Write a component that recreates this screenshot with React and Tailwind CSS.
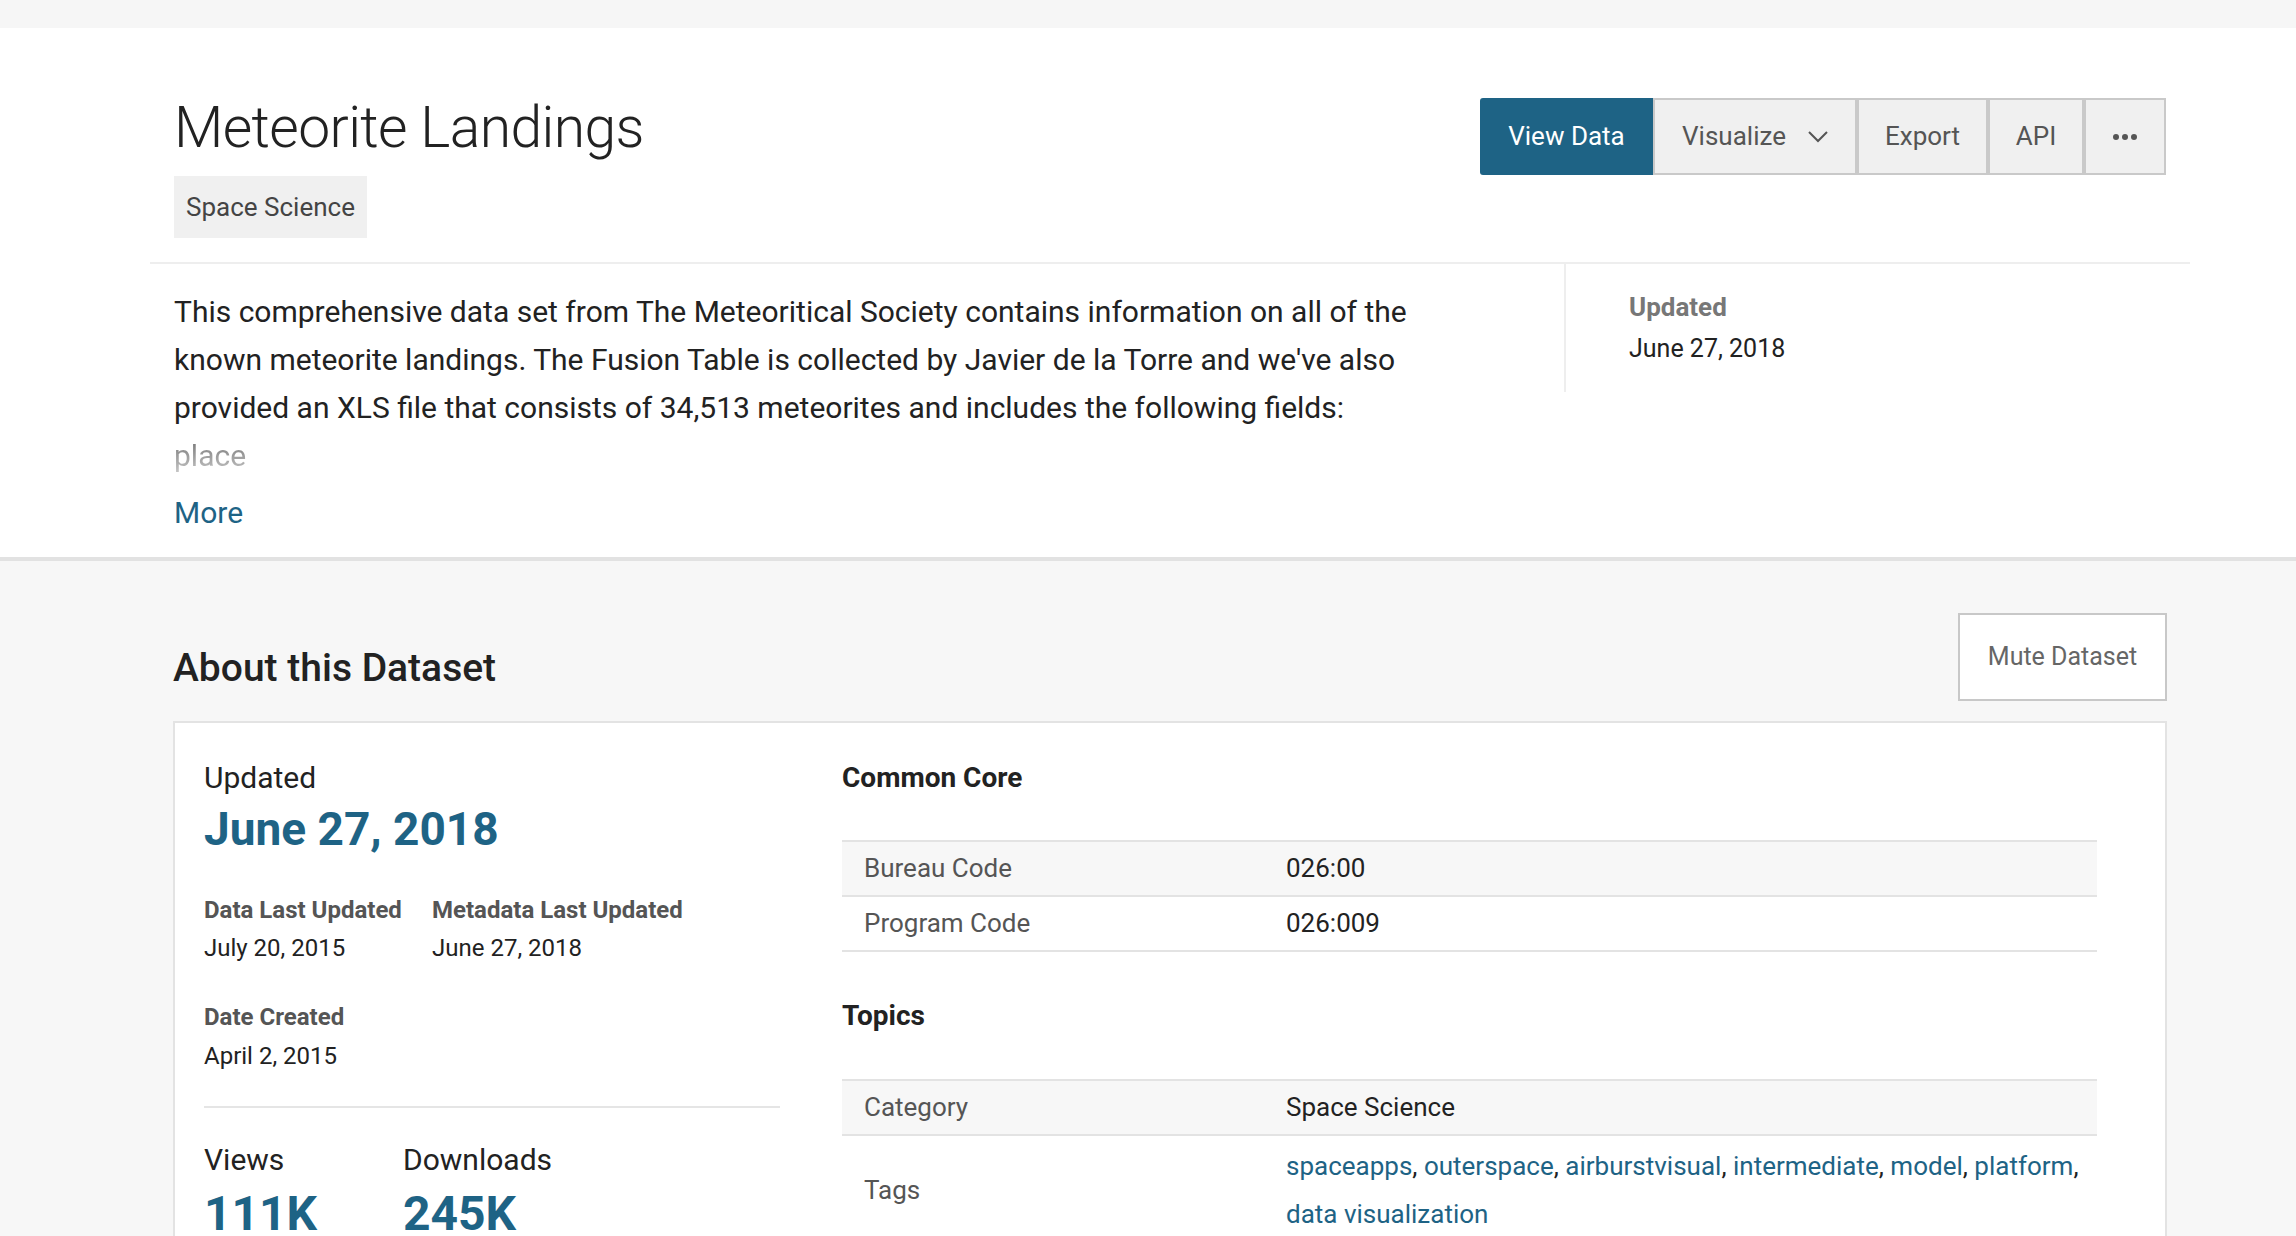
const blue = 'text-[#1e6385]';

const buttons = [
  { label: 'Export', w: 'w-[131px]' },
  { label: 'API', w: 'w-[96px]' },
];

const tags = ['spaceapps', 'outerspace', 'airburstvisual', 'intermediate', 'model', 'platform', 'data visualization'];

function Row({ label, children, shaded, tall }) {
  return (
    <div className={`flex border-t-2 border-[#e3e3e3] ${shaded ? 'bg-[#f7f7f7]' : 'bg-white'} ${tall ? 'pt-[6px] pb-[38px]' : 'h-[55px]'} items-center`}>
      <div className="w-[444px] shrink-0 pl-[22px] text-[26px] text-[#555]">{label}</div>
      <div className="min-w-0 flex-1 text-[26px] text-[#222]">{children}</div>
    </div>
  );
}

export default function App() {
  return (
    <div className="min-h-[1236px] bg-[#f7f7f7] font-['Roboto',sans-serif] text-[#222]">
      {/* header */}
      <div className="bg-white border-b-4 border-[#e2e2e2]">
        <div className="h-[28px] bg-[#f6f6f6]" />
        <div className="ml-[150px] w-[2040px]">
          <div className="flex justify-between items-start px-[24px] pt-[66px] pb-[24px] border-b-2 border-[#eeeeee]">
            <div>
              <h1 className="text-[57px] leading-[68px] font-light tracking-[-0.6px] text-[#222]">Meteorite Landings</h1>
              <div className="mt-[14px] inline-flex h-[62px] items-center bg-[#f0f0f0] px-[12px] text-[26px] text-[#444]">
                Space Science
              </div>
            </div>
            <div className="mt-[4px] flex">
              <div className="flex h-[77px] w-[173px] items-center justify-center rounded-l-[3px] bg-[#1e6385] text-[26px] text-white">
                View Data
              </div>
              <div className="flex h-[77px] w-[204px] items-center justify-center gap-[22px] border-2 border-[#c9c9c9] bg-[#f0f0f0] text-[26px] text-[#555]">
                Visualize
                <svg width="20" height="12" viewBox="0 0 20 12" fill="none" stroke="#555" strokeWidth="2">
                  <polyline points="1,1 10,10 19,1" />
                </svg>
              </div>
              {buttons.map((b) => (
                <div key={b.label} className={`flex h-[77px] ${b.w} items-center justify-center border-2 border-[#c9c9c9] bg-[#f0f0f0] text-[26px] text-[#555]`}>
                  {b.label}
                </div>
              ))}
              <div className="flex h-[77px] w-[82px] items-center justify-center gap-[3px] border-2 border-[#c9c9c9] bg-[#f0f0f0]">
                <span className="h-[6px] w-[6px] rounded-full bg-[#555]" />
                <span className="h-[6px] w-[6px] rounded-full bg-[#555]" />
                <span className="h-[6px] w-[6px] rounded-full bg-[#555]" />
              </div>
            </div>
          </div>

          <div className="flex">
            <div className="w-[1414px] shrink-0 pl-[24px] pt-[24px] pb-[20px]">
              <p className="max-w-[1290px] text-[30px] leading-[48px] text-[#222]">
                This comprehensive data set from The Meteoritical Society contains information on all of the known meteorite
                landings. The Fusion Table is collected by Javier de la Torre and we've also provided an XLS file that consists of
                34,513 meteorites and includes the following fields:
              </p>
              <p className="inline-block bg-gradient-to-b from-[#666] to-[#d8d8d8] bg-clip-text text-[30px] leading-[48px] text-transparent">
                place
              </p>
              <div className={`mt-[9px] text-[30px] leading-[48px] ${blue}`}>More</div>
            </div>
            <div className="h-[128px] flex-1 border-l-2 border-[#eeeeee] pl-[63px] pt-[22px]">
              <div className="text-[26px] leading-[42px] font-bold text-[#777]">Updated</div>
              <div className="text-[25px] leading-[42px] text-[#222]">June 27, 2018</div>
            </div>
          </div>
        </div>
      </div>

      {/* about */}
      <div className="ml-[173px] w-[1994px] pt-[52px]">
        <div className="flex items-end justify-between">
          <h2 className="pb-[10px] text-[39px] leading-[46px] font-medium text-[#222]">About this Dataset</h2>
          <div className="flex h-[88px] w-[209px] items-center justify-center border-2 border-[#c8c8c8] bg-white text-[25px] text-[#666]">
            Mute Dataset
          </div>
        </div>

        <div className="mt-[20px] flex border-2 border-[#e3e3e3] bg-white pl-[29px] pr-[68px] pt-[37px] pb-[30px]">
          <div className="w-[576px] shrink-0">
            <div className="text-[30px] leading-[36px]">Updated</div>
            <div className={`mt-[7px] text-[46px] leading-[52px] font-bold ${blue}`}>June 27, 2018</div>
            <div className="mt-[37px] flex">
              <div className="w-[228px]">
                <div className="text-[24px] leading-[36px] font-bold text-[#555]">Data Last Updated</div>
                <div className="mt-[2px] text-[24px] leading-[36px]">July 20, 2015</div>
              </div>
              <div>
                <div className="text-[24px] leading-[36px] font-bold text-[#555]">Metadata Last Updated</div>
                <div className="mt-[2px] text-[24px] leading-[36px]">June 27, 2018</div>
              </div>
            </div>
            <div className="mt-[33px] text-[24px] leading-[36px] font-bold text-[#555]">Date Created</div>
            <div className="mt-[3px] text-[24px] leading-[36px]">April 2, 2015</div>
            <div className="mt-[32px] border-t-2 border-[#e5e5e5]" />
            <div className="mt-[34px] flex">
              <div className="w-[199px]">
                <div className="text-[30px] leading-[36px]">Views</div>
                <div className={`mt-[10px] text-[48px] leading-[52px] font-bold ${blue}`}>111K</div>
              </div>
              <div>
                <div className="text-[30px] leading-[36px]">Downloads</div>
                <div className={`mt-[10px] text-[48px] leading-[52px] font-bold ${blue}`}>245K</div>
              </div>
            </div>
          </div>

          <div className="ml-[62px] min-w-0 flex-1">
            <h3 className="text-[28px] leading-[36px] font-bold">Common Core</h3>
            <div className="mt-[44px] border-b-2 border-[#e3e3e3]">
              <Row label="Bureau Code" shaded>026:00</Row>
              <Row label="Program Code">026:009</Row>
            </div>
            <h3 className="mt-[46px] text-[28px] leading-[36px] font-bold">Topics</h3>
            <div className="mt-[45px]">
              <Row label="Category" shaded>Space Science</Row>
              <Row label="Tags" tall>
                <p className="leading-[48px]">
                  {tags.map((t, i) => (
                    <span key={t}>
                      <span className="whitespace-nowrap">
                        <span className={blue}>{t}</span>
                        {i < tags.length - 1 ? ',' : ''}
                      </span>{' '}
                    </span>
                  ))}
                </p>
              </Row>
            </div>
          </div>
        </div>
      </div>
    </div>
  );
}
